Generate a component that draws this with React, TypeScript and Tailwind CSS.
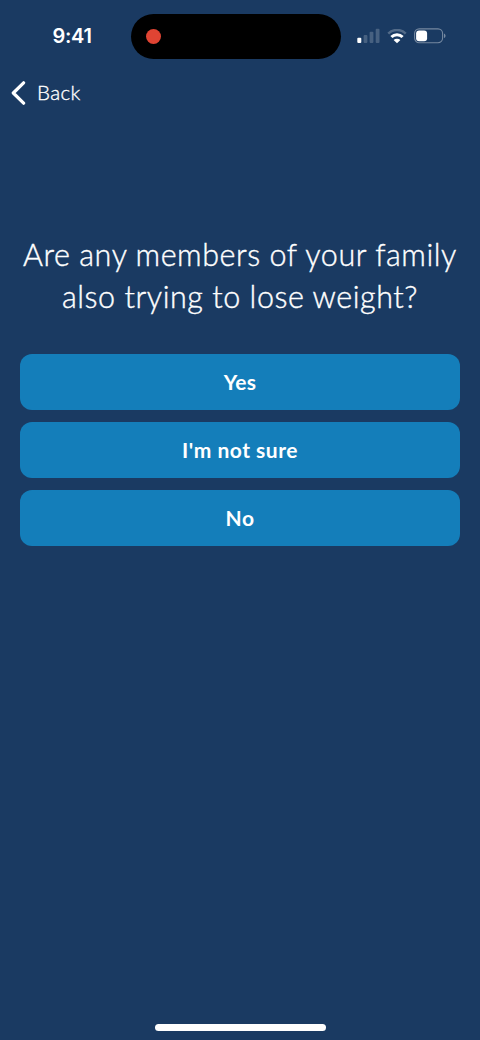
const ANSWERS = [
  { id: 'yes', label: 'Yes', tracking: 'tracking-[0.2px]' },
  { id: 'not-sure', label: "I'm not sure", tracking: 'tracking-[0.5px]' },
  { id: 'no', label: 'No', tracking: 'tracking-[0.5px]' },
]

function SignalIcon() {
  return (
    <svg width="23" height="16" viewBox="0 0 23 16" fill="#fff">
      <rect x="0.3" y="9.7" width="4" height="5.3" rx="1" />
      <rect x="6.6" y="7" width="3.8" height="8" rx="1" opacity="0.2" />
      <rect x="12.6" y="3.8" width="3.8" height="11.2" rx="1" opacity="0.2" />
      <rect x="18.7" y="0.8" width="3.8" height="14.2" rx="1" opacity="0.2" />
    </svg>
  )
}

function WifiIcon() {
  return (
    <svg width="20" height="15" viewBox="0 0 20 15" fill="none" stroke="#fff">
      <path d="M1.3 4.6a12.4 12.4 0 0 1 17.4 0" strokeWidth="2.6" opacity="0.25" />
      <path d="M4.4 8a7.9 7.9 0 0 1 11.2 0" strokeWidth="3" />
      <path d="M10 14.2 6.6 11.1a4.8 4.8 0 0 1 6.8 0z" fill="#fff" stroke="none" />
    </svg>
  )
}

function BatteryIcon() {
  return (
    <svg width="33" height="16" viewBox="0 0 33 16" fill="none">
      <rect x="0.6" y="0.9" width="28" height="13.8" rx="4.6" stroke="#fff" strokeOpacity="0.4" strokeWidth="1.1" />
      <rect x="2.1" y="2.4" width="11" height="10.8" rx="3" fill="#fff" />
      <path d="M30.2 5.5c1.7.8 1.7 3.8 0 4.6z" fill="#fff" fillOpacity="0.5" />
    </svg>
  )
}

function StatusBar() {
  return (
    <div className="flex h-[72px] shrink-0 items-start">
      <div className="w-[131px] pt-[22px] pl-[52.5px] font-['Inter',sans-serif] text-[20px] leading-7 font-semibold tracking-[-0.3px]">
        9:41
      </div>
      {/* Dynamic Island with the recording dot */}
      <div className="mt-3.5 flex h-[44.5px] w-[210px] items-center rounded-full bg-black pl-[15px]">
        <span className="size-[15px] rounded-full bg-[#e04433]" />
      </div>
      <div className="flex h-[72px] items-center pl-4">
        <SignalIcon />
        <span className="ml-[6.5px]">
          <WifiIcon />
        </span>
        <span className="ml-[7px]">
          <BatteryIcon />
        </span>
      </div>
    </div>
  )
}

export default function App() {
  return (
    <div className="flex h-[1040px] w-[480px] flex-col overflow-hidden bg-[#1a3a62] font-['Lato',sans-serif] text-white">
      <StatusBar />

      <header className="flex h-[41px] shrink-0 items-center pl-[10.5px]">
        <button className="flex items-center gap-[11.5px]">
          <svg width="15" height="24" viewBox="0 0 15 24" fill="none" stroke="#fff" strokeWidth="3.2" strokeLinecap="round" strokeLinejoin="round">
            <path d="M12.6 1.8 2.3 12l10.3 10.2" />
          </svg>
          <span className="pb-0.5 text-[20.5px] leading-6 font-light tracking-[0.4px] [-webkit-text-stroke:0.35px_white]">Back</span>
        </button>
      </header>

      <main className="flex flex-1 flex-col px-5 pt-[119.5px]">
        <h1 className="text-center text-[30.5px] leading-[42px] font-light whitespace-nowrap [-webkit-text-stroke:0.4px_white]">
          <span className="block tracking-[0.55px]">Are any members of your family</span>
          <span className="block tracking-[0.55px]">also trying to lose weight?</span>
        </h1>

        <div className="mt-[37.9px] flex flex-col gap-[12.3px]">
          {ANSWERS.map(({ id, label, tracking }) => (
            <button
              key={id}
              className="flex h-[55.7px] w-full items-center justify-center rounded-xl bg-[#147eba] text-[21px] font-bold"
            >
              <span className={tracking}>{label}</span>
            </button>
          ))}
        </div>
      </main>

      {/* home indicator */}
      <div className="mx-auto mb-[9.5px] h-[6.5px] w-[171px] shrink-0 rounded-full bg-white" />
    </div>
  )
}
